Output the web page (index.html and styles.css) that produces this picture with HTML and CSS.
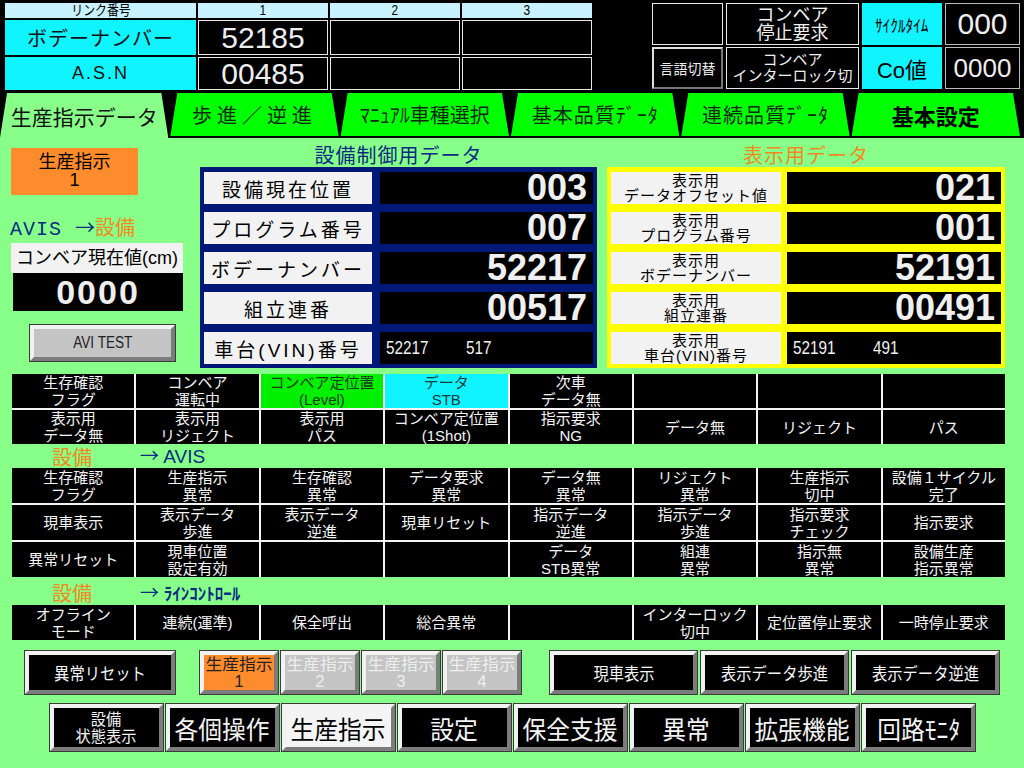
FILE: index.html
```html
<!DOCTYPE html>
<html lang="ja">
<head>
<meta charset="utf-8">
<title>生産指示データ</title>
<link rel="stylesheet" href="styles.css">
</head>
<body>
<div class="screen">
  <header class="topbar">
    <div class="link-table">
      <div class="lh"><span class="cn">リンク番号</span></div>
      <div class="lh"><span class="cn">1</span></div>
      <div class="lh"><span class="cn">2</span></div>
      <div class="lh"><span class="cn">3</span></div>
      <div class="lk">ボデーナンバー</div>
      <div class="lv">52185</div>
      <div class="lv"></div>
      <div class="lv"></div>
      <div class="lk asn"><span class="cn">A.S.N</span></div>
      <div class="lv">00485</div>
      <div class="lv"></div>
      <div class="lv"></div>
    </div>
    <div class="status">
      <div class="st-cell"></div>
      <div class="st-cell st-big">コンベア<br>停止要求</div>
      <div class="st-key"><span class="cn">ｻｲｸﾙﾀｲﾑ</span></div>
      <div class="st-val">000</div>
      <div class="st-btn">言語切替</div>
      <div class="st-cell st-small">コンベア<br>インターロック切</div>
      <div class="st-key st-co">Co値</div>
      <div class="st-val st-val-sm">0000</div>
    </div>
  </header>

  <nav class="tabs">
    <div class="tab active">生産指示データ</div>
    <div class="tab spaced">歩進／逆進</div>
    <div class="tab">ﾏﾆｭｱﾙ車種選択</div>
    <div class="tab spaced-s">基本品質ﾃﾞｰﾀ</div>
    <div class="tab spaced-s">連続品質ﾃﾞｰﾀ</div>
    <div class="tab bold">基本設定</div>
  </nav>

  <main class="main">
    <section class="upper">
      <div class="leftcol">
        <div class="order">生産指示<br>1</div>
        <div class="avis-label"><span class="navy avis">AVIS </span><span class="navy arr">→</span><span class="orange">設備</span></div>
        <div class="cur-label">コンベア現在値(cm)</div>
        <div class="cur-val">0000</div>
        <div class="avi-test bevel"><span class="cn">AVI TEST</span></div>
      </div>

      <div class="panel">
        <div class="panel-title navy">設備制御用データ</div>
        <div class="panel-box ctrl">
          <div class="pl">設備現在位置</div><div class="pv">003</div>
          <div class="pl">プログラム番号</div><div class="pv">007</div>
          <div class="pl">ボデーナンバー</div><div class="pv">52217</div>
          <div class="pl">組立連番</div><div class="pv">00517</div>
          <div class="pl">車台(VIN)番号</div><div class="pv pv-sm"><span class="cn">52217</span><span class="cn">517</span></div>
        </div>
      </div>

      <div class="panel panel-r">
        <div class="panel-title orange">表示用データ</div>
        <div class="panel-box disp">
          <div class="pl pl2">表示用<br>データオフセット値</div><div class="pv">021</div>
          <div class="pl pl2">表示用<br>プログラム番号</div><div class="pv">001</div>
          <div class="pl pl2">表示用<br>ボデーナンバー</div><div class="pv">52191</div>
          <div class="pl pl2">表示用<br>組立連番</div><div class="pv">00491</div>
          <div class="pl pl2">表示用<br>車台(VIN)番号</div><div class="pv pv-sm"><span class="cn">52191</span><span class="cn">491</span></div>
        </div>
      </div>
    </section>

    <section class="sig-grid g1">
      <div class="c"><span class="cn">生存確認<br>フラグ</span></div>
      <div class="c"><span class="cn">コンベア<br>運転中</span></div>
      <div class="c on-green"><span class="cn">コンベア定位置<br>(Level)</span></div>
      <div class="c on-cyan"><span class="cn">データ<br>STB</span></div>
      <div class="c"><span class="cn">次車<br>データ無</span></div>
      <div class="c"></div>
      <div class="c"></div>
      <div class="c"></div>
      <div class="c"><span class="cn">表示用<br>データ無</span></div>
      <div class="c"><span class="cn">表示用<br>リジェクト</span></div>
      <div class="c"><span class="cn">表示用<br>パス</span></div>
      <div class="c"><span class="cn">コンベア定位置<br>(1Shot)</span></div>
      <div class="c"><span class="cn">指示要求<br>NG</span></div>
      <div class="c"><span class="cn">データ無</span></div>
      <div class="c"><span class="cn">リジェクト</span></div>
      <div class="c"><span class="cn">パス</span></div>
    </section>

    <div class="sec"><span class="orange sec-a cn">設備</span><span class="navy sec-b cn"><span class="arr">→</span> AVIS</span></div>

    <section class="sig-grid g2">
      <div class="c"><span class="cn">生存確認<br>フラグ</span></div>
      <div class="c"><span class="cn">生産指示<br>異常</span></div>
      <div class="c"><span class="cn">生存確認<br>異常</span></div>
      <div class="c"><span class="cn">データ要求<br>異常</span></div>
      <div class="c"><span class="cn">データ無<br>異常</span></div>
      <div class="c"><span class="cn">リジェクト<br>異常</span></div>
      <div class="c"><span class="cn">生産指示<br>切中</span></div>
      <div class="c"><span class="cn">設備１サイクル<br>完了</span></div>
      <div class="c"><span class="cn">現車表示</span></div>
      <div class="c"><span class="cn">表示データ<br>歩進</span></div>
      <div class="c"><span class="cn">表示データ<br>逆進</span></div>
      <div class="c"><span class="cn">現車リセット</span></div>
      <div class="c"><span class="cn">指示データ<br>逆進</span></div>
      <div class="c"><span class="cn">指示データ<br>歩進</span></div>
      <div class="c"><span class="cn">指示要求<br>チェック</span></div>
      <div class="c"><span class="cn">指示要求</span></div>
      <div class="c"><span class="cn">異常リセット</span></div>
      <div class="c"><span class="cn">現車位置<br>設定有効</span></div>
      <div class="c"></div>
      <div class="c"></div>
      <div class="c"><span class="cn">データ<br>STB異常</span></div>
      <div class="c"><span class="cn">組連<br>異常</span></div>
      <div class="c"><span class="cn">指示無<br>異常</span></div>
      <div class="c"><span class="cn">設備生産<br>指示異常</span></div>
    </section>

    <div class="sec sec2"><span class="orange sec-a cn">設備</span><span class="navy sec-b sec-b2 cn"><span class="arr">→</span> ﾗｲﾝｺﾝﾄﾛｰﾙ</span></div>

    <section class="sig-grid g3">
      <div class="c"><span class="cn">オフライン<br>モード</span></div>
      <div class="c"><span class="cn">連続(運準)</span></div>
      <div class="c"><span class="cn">保全呼出</span></div>
      <div class="c"><span class="cn">総合異常</span></div>
      <div class="c"></div>
      <div class="c"><span class="cn">インターロック<br>切中</span></div>
      <div class="c"><span class="cn">定位置停止要求</span></div>
      <div class="c"><span class="cn">一時停止要求</span></div>
    </section>

    <div class="btnrow">
      <div class="bevel btn btn-reset"><span class="cn">異常リセット</span></div>
      <div class="orders">
        <div class="bevel ob ob-on"><span class="cn">生産指示<br>1</span></div>
        <div class="bevel ob"><span class="cn">生産指示<br>2</span></div>
        <div class="bevel ob"><span class="cn">生産指示<br>3</span></div>
        <div class="bevel ob"><span class="cn">生産指示<br>4</span></div>
      </div>
      <div class="nav3">
        <div class="bevel btn"><span class="cn">現車表示</span></div>
        <div class="bevel btn"><span class="cn">表示データ歩進</span></div>
        <div class="bevel btn"><span class="cn">表示データ逆進</span></div>
      </div>
    </div>

    <nav class="bottomnav">
      <div class="bevel nb nb-two"><span class="cn">設備<br>状態表示</span></div>
      <div class="bevel nb"><span class="cn">各個操作</span></div>
      <div class="bevel nb nb-on"><span class="cn">生産指示</span></div>
      <div class="bevel nb"><span class="cn">設定</span></div>
      <div class="bevel nb"><span class="cn">保全支援</span></div>
      <div class="bevel nb"><span class="cn">異常</span></div>
      <div class="bevel nb"><span class="cn">拡張機能</span></div>
      <div class="bevel nb"><span class="cn">回路ﾓﾆﾀ</span></div>
    </nav>
  </main>
</div>
</body>
</html>
```

FILE: styles.css
```css
* { box-sizing: border-box; margin: 0; padding: 0; }
html, body { width: 1024px; height: 768px; overflow: hidden; background: #000; }
body { font-family: "Liberation Sans", "Noto Sans CJK JP", sans-serif; color: #000; }

.cn { display: inline-block; white-space: nowrap; }
.navy { color: #0a2a84; }
.orange { color: #f08a20; }
.arr { font-family: "Noto Sans CJK JP", sans-serif; line-height: 1; }

.screen { width: 1024px; height: 768px; display: flex; flex-direction: column; background: #000; }

/* ---------- top bar ---------- */
.topbar { height: 93px; display: flex; justify-content: space-between; padding: 3px 4px 0 5px; }
.link-table {
  display: grid;
  grid-template-columns: 191px 130px 130px 130px;
  grid-template-rows: 15px 35px 33px;
  gap: 2px;
}
.lh { background: #c8f2ff; font-size: 14px; line-height: 15px; text-align: center; }
.lh .cn { transform: scaleX(0.85); }
.lk { background: #10f4ff; font-size: 20px; letter-spacing: 1px; display: flex; align-items: center; justify-content: center; color: #111; }
.asn { font-size: 18px; letter-spacing: 2px; }
.lv {
  background: #000; border: 1px solid #e8e8e8; color: #eee;
  font-size: 30px;
  display: flex; align-items: center; justify-content: center;
}

.status {
  display: grid;
  grid-template-columns: 71px 133px 80px 75px;
  grid-template-rows: 42px 42px;
  gap: 2px 3px;
}
.st-cell {
  background: #000; border: 1px solid #e8e8e8; color: #f0f0f0;
  display: flex; align-items: center; justify-content: center; text-align: center;
  font-size: 18px; line-height: 18px; white-space: nowrap;
}
.st-small { font-size: 15px; line-height: 16px; }
.st-key { background: #10f4ff; display: flex; align-items: center; justify-content: center; font-size: 17px; }
.st-key .cn { transform: scaleX(0.9); }
.st-co { font-size: 22px; }
.st-val {
  background: #000; border: 1px solid #bbb; color: #eee;
  font-size: 30px;
  display: flex; align-items: center; justify-content: center;
}
.st-val-sm { font-size: 26px; }
.st-btn {
  background: #000; color: #eee; font-size: 14px;
  border: 2px solid; border-color: #e0e0e0 #777 #777 #e0e0e0;
  display: flex; align-items: center; justify-content: center;
}

/* ---------- tabs ---------- */
.tabs { height: 45px; display: flex; gap: 2px; padding-right: 4px; background: #000; align-items: flex-start; }
.tab {
  flex: 1; height: 43px; background: #00ff00; color: #102810;
  clip-path: polygon(7px 0, calc(100% - 7px) 0, 100% 100%, 0 100%);
  display: flex; align-items: center; justify-content: center;
  font-size: 20px;
}
.tab.active { height: 45px; background: #88ff88; font-size: 21px; color: #111; }
.tab.spaced { letter-spacing: 5px; }
.tab.spaced-s { letter-spacing: 1px; }
.tab.bold { font-weight: bold; font-size: 22px; color: #000; }

/* ---------- main ---------- */
.main { flex: 1; background: #88ff88; display: flex; flex-direction: column; }
.upper { display: flex; height: 236px; }

.leftcol { width: 172px; margin-left: 11px; display: flex; flex-direction: column; }
.order {
  width: 127px; height: 47px; margin-top: 10px; background: #ff8c2c;
  font-size: 18px; line-height: 18px; text-align: center; padding-top: 5px;
}
.avis-label { margin-top: 22px; height: 22px; font-size: 20px; line-height: 22px; margin-left: -1px; white-space: nowrap; }
.avis { font-family: "Liberation Mono", "Noto Sans CJK JP", monospace; letter-spacing: 1px; }
.cur-label { margin-top: 4px; height: 30px; background: #f2f2f2; font-size: 18px; line-height: 30px; text-align: center; white-space: nowrap; }
.cur-val {
  margin-left: 2px; height: 38px; background: #000; color: #eee;
  font-weight: bold; font-size: 34px;
  display: flex; align-items: center; justify-content: center; letter-spacing: 2px;
}
.avi-test {
  margin: 14px 0 0 19px; width: 145px; height: 36px; background: #c4c4c4;
  color: #222; font-size: 16px; display: flex; align-items: center; justify-content: center;
}
.avi-test .cn { transform: scaleX(0.85); }

.panel { width: 397px; margin-left: 17px; display: flex; flex-direction: column; }
.panel-r { width: 398px; margin-left: 10px; }
.panel-title { margin-top: 7px; height: 22px; line-height: 22px; text-align: center; font-size: 20px; letter-spacing: 1px; }
.panel-box {
  height: 201px; padding: 5px 4px 4px;
  display: grid; grid-auto-rows: 32px; row-gap: 8px;
}
.ctrl { background: #001878; grid-template-columns: 168px 1fr; column-gap: 8px; }
.disp { background: #ffff00; grid-template-columns: 170px 1fr; column-gap: 6px; }
.pl {
  background: #f2f2f2; font-size: 19px; letter-spacing: 3px;
  display: flex; align-items: center; justify-content: center; text-align: center; white-space: nowrap;
}
.pl2 { font-size: 15px; line-height: 15px; letter-spacing: 1px; }
.pv {
  background: #000; color: #f0f0f0;
  font-weight: bold; font-size: 36px;
  display: flex; align-items: center; justify-content: flex-end; padding-right: 6px;
}
.pv-sm { font-weight: normal; font-size: 18px; justify-content: flex-start; padding-left: 6px; gap: 30px; }
.pv-sm .cn { transform: scaleX(0.85); transform-origin: left center; }

/* ---------- signal grids ---------- */
.sig-grid {
  margin-left: 12px; width: 993px;
  display: grid; grid-template-columns: repeat(8, 1fr); gap: 2px; background: #f4f4f4;
}
.g1 { grid-auto-rows: 34px; }
.g2 { grid-auto-rows: 35px; }
.g3 { grid-auto-rows: 35px; }
.c {
  background: #000; color: #f4f4f4;
  display: flex; align-items: center; justify-content: center; text-align: center;
  font-size: 15px; line-height: 17px;
}
.c.on-green { background: #00f000; color: #1a3a1a; }
.c.on-cyan { background: #10f4ff; color: #1a3a3a; }

.sec { height: 24px; display: flex; align-items: center; font-size: 20px; }
.sec2 { height: 28px; padding-top: 2px; }
.sec-a { margin-left: 52px; }
.sec-b { margin-left: 48px; font-size: 19px; }
.sec-b2 { font-size: 17px; font-weight: bold; }
.sec-b2 .arr { font-weight: normal; font-size: 19px; }

/* ---------- buttons ---------- */
.bevel {
  border: 4px solid; border-color: #f2f2f2 #7c7c7c #7c7c7c #f2f2f2;
  box-shadow: 0 0 0 1px #3a3a3a;
}
.btnrow { margin-top: 11px; height: 43px; display: flex; }
.btn {
  background: #000; color: #f4f4f4; font-size: 17px;
  display: flex; align-items: center; justify-content: center;
}
.btn .cn { transform: scaleX(0.9); }
.btn-reset { width: 150px; margin-left: 25px; }
.orders { margin-left: 25px; display: flex; gap: 3px; }
.ob {
  width: 78px; background: #c4c4c4; color: #eee; font-size: 16px; line-height: 17px;
  display: flex; align-items: center; justify-content: center; text-align: center;
}
.ob .cn { transform: scaleX(1.05); }
.ob-on { background: #ff8c2c; color: #222; }
.nav3 { margin-left: 29px; display: flex; gap: 4px; }
.nav3 .btn { width: 147px; }

.bottomnav { margin-top: 10px; height: 47px; display: flex; gap: 3px; padding-left: 50px; }
.nb {
  width: 113px; background: #000; color: #f4f4f4; font-size: 25px;
  display: flex; align-items: center; justify-content: center; text-align: center;
}
.nb .cn { transform: scaleX(0.95); }
.nb-two { font-size: 16px; line-height: 17px; }
.nb-on { background: #f4f4f4; color: #000; }
```
